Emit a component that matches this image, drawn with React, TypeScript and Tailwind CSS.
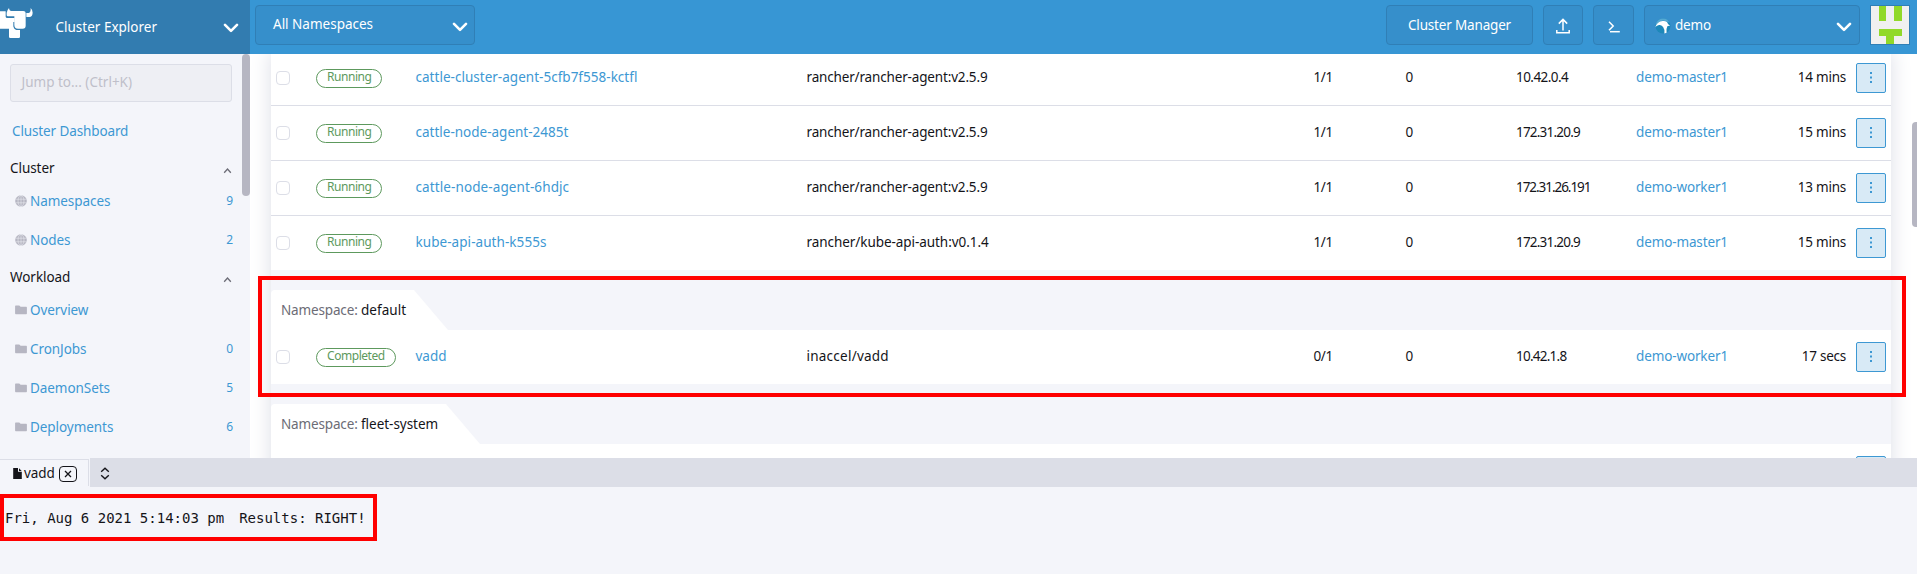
import type { ReactNode } from "react";

const rows = [
  { state: "Running", name: "cattle-cluster-agent-5cfb7f558-kctfl", nameCls: "tracking-[0.02px]", image: "rancher/rancher-agent:v2.5.9", imageCls: "tracking-[-0.16px]", ready: "1/1", ip: "10.42.0.4", ipCls: "tracking-[-0.55px]", node: "demo-master1", age: "14 mins" },
  { state: "Running", name: "cattle-node-agent-2485t", nameCls: "", image: "rancher/rancher-agent:v2.5.9", imageCls: "tracking-[-0.16px]", ready: "1/1", ip: "172.31.20.9", ipCls: "tracking-[-0.79px]", node: "demo-master1", age: "15 mins" },
  { state: "Running", name: "cattle-node-agent-6hdjc", nameCls: "tracking-[0.1px]", image: "rancher/rancher-agent:v2.5.9", imageCls: "tracking-[-0.16px]", ready: "1/1", ip: "172.31.26.191", ipCls: "tracking-[-1.05px]", node: "demo-worker1", age: "13 mins" },
  { state: "Running", name: "kube-api-auth-k555s", nameCls: "tracking-[0.06px]", image: "rancher/kube-api-auth:v0.1.4", imageCls: "tracking-[-0.06px]", ready: "1/1", ip: "172.31.20.9", ipCls: "tracking-[-0.79px]", node: "demo-master1", age: "15 mins" },
];

const defaultRow = { state: "Completed", name: "vadd", nameCls: "", image: "inaccel/vadd", imageCls: "tracking-[0.24px]", ready: "0/1", ip: "10.42.1.8", ipCls: "tracking-[-0.75px]", node: "demo-worker1", age: "17 secs" };

type Row = (typeof rows)[number];

function Chevron() {
  return (
    <svg width="16" height="10" viewBox="0 0 16 10" fill="none" stroke="#fff" strokeWidth="2.6" strokeLinecap="round" strokeLinejoin="round">
      <path d="M2 1.8 8 7.8 14 1.8" />
    </svg>
  );
}

function Logo() {
  return (
    <svg width="35" height="40" viewBox="0 0 105 120" className="shrink-0 self-start">
      <path fill="#fff" d="M0 34H17V50Q17 54 22 54H44V66H40V86H0Z" />
      <path fill="#fff" d="M27 24Q28 33 34 33H70Q77 33 77 39V77Q77 86 68 86H54Q43 86 43 75V49H24Q20 49 20 45V38Q21 31 27 24Z" />
      <path fill="#fff" d="M92 24Q98 30 98 38Q97 51 88 51H79V39H86Q93 37 92 24Z" />
      <path fill="#fff" d="M27 80H40Q43 90 54 90H60V110Q60 114 56 114H31Q27 114 27 110Z" />
    </svg>
  );
}

function Globe() {
  return (
    <svg width="12" height="12" viewBox="0 0 12 12">
      <circle cx="6" cy="6" r="5.8" fill="#b6b6c2" />
      <g fill="none" stroke="#f4f5fa" strokeWidth="0.6" opacity="0.85">
        <path d="M.5 4.200h11M.5 7.800h11M6 .3v11.400" />
        <ellipse cx="6" cy="6" rx="3" ry="5.600" />
      </g>
    </svg>
  );
}

function Folder() {
  return (
    <svg width="12" height="10" viewBox="0 0 12 10">
      <path fill="#b6b6c2" d="M.8.400H4.300L5.600 1.800H11.200Q11.900 1.800 11.900 2.500V8.600Q11.900 9.300 11.200 9.300H.8Q.1 9.300 .1 8.600V1.100Q.1.400.8.400Z" />
    </svg>
  );
}

function NavGroup({ children }: { children: ReactNode }) {
  return (
    <div className="flex h-[30px] items-center justify-between pr-[10.500px] pl-[10px] tracking-[-0.05px] text-[#141419]">
      <span>{children}</span>
      <svg width="9" height="7" viewBox="0 0 9 7" fill="none" stroke="#6c6c76" strokeWidth="1.300" className="mt-1">
        <path d="M1.200 5.700 4.500 2 7.800 5.700" />
      </svg>
    </div>
  );
}

function NavItem({ icon, label, count }: { icon: ReactNode; label: string; count?: string }) {
  return (
    <div className="flex h-[39px] items-center pr-[9px] pl-[15px]">
      <span className="flex w-[15px]">{icon}</span>
      <span className="flex-1 tracking-[-0.06px]">{label}</span>
      <span className="pt-px text-[12px]">{count}</span>
    </div>
  );
}

function TableRow({ row, line }: { row: Row; line?: boolean }) {
  return (
    <div className={line ? "flex h-[55px] items-center border-b border-[#dcdee7] bg-white" : "flex h-[54px] items-center bg-white"}>
      <div className="w-[45px] pl-[5px]">
        <div className="size-[14px] rounded-[4px] border border-[#dcdee7] bg-white" />
      </div>
      <div className="w-[99.500px]">
        <span className="inline-flex h-[19px] items-center rounded-full border border-[#5d995d] px-[10px] pb-[2px] align-middle text-[12px] tracking-[-0.45px] text-[#5d995d]">{row.state}</span>
      </div>
      <div className="w-[391px] pb-[2px] text-[#3d98d3]"><span className={row.nameCls}>{row.name}</span></div>
      <div className="w-[507px] pb-[2px]"><span className={row.imageCls}>{row.image}</span></div>
      <div className="w-[92px] pb-[2px] tracking-[-0.4px]">{row.ready}</div>
      <div className="w-[110.500px] pb-[2px]">0</div>
      <div className="w-[120px] pb-[2px]"><span className={row.ipCls}>{row.ip}</span></div>
      <div className="w-[120px] pb-[2px] tracking-[-0.13px] text-[#3d98d3]">{row.node}</div>
      <div className="flex-1 pb-[2px] text-right tracking-[-0.24px]">{row.age}</div>
      <div className="mr-[5px] ml-[10px] flex h-[30px] w-[30px] items-center justify-center rounded-[2px] border border-[#3d98d3] bg-[#d8eaf6]">
        <svg width="4" height="14" viewBox="0 0 4 14" fill="#3d98d3">
          <rect x="1" y="1" width="2" height="2" />
          <rect x="1" y="5.500" width="2" height="2" />
          <rect x="1" y="10" width="2" height="2" />
        </svg>
      </div>
    </div>
  );
}

function GroupTab({ name, nameCls }: { name: string; nameCls: string }) {
  return (
    <div className="flex h-[60px] items-end bg-[#f4f5fa]">
      <div className="flex h-10 items-center rounded-tl-[4px] bg-white pr-[7.500px] pb-[1px] pl-[10px] whitespace-pre">
        <span className="tracking-[-0.15px] text-[#6c6c76]">Namespace: </span>
        <span className={nameCls}>{name}</span>
      </div>
      <svg width="34" height="40" viewBox="0 0 34 40"><path d="M0 0 34 40H0Z" fill="#fff" /></svg>
    </div>
  );
}

export default function App() {
  return (
    <div className="relative flex h-[574px] w-[1917px] flex-col overflow-hidden bg-white font-['Noto_Sans',sans-serif] text-[13.5px] leading-[18px] text-[#141419]">
      <header className="flex h-[54px] shrink-0 bg-[#3796d4] text-white">
        <div className="flex w-[250px] items-center bg-[#327cb0] pr-[11px]">
          <Logo />
          <span className="ml-[20.500px] flex-1 pb-[1px]">Cluster Explorer</span>
          <span className="pt-[2px]"><Chevron /></span>
        </div>
        <div className="mt-[5px] ml-[5px] flex h-10 w-[220px] items-center justify-between rounded-[4px] border border-[#307fb6] bg-[#368fcb] pr-[6px] pl-[17px]">
          <span className="pb-[2px]">All Namespaces</span>
          <span className="pt-[3px]"><Chevron /></span>
        </div>
        <div className="mt-[5px] ml-auto flex h-10 w-[147px] items-center justify-center rounded-[4px] border border-[#307fb6] bg-[#368fcb] tracking-[-0.17px]">Cluster Manager</div>
        <div className="mt-[5px] ml-[10px] flex h-10 w-10 items-center justify-center rounded-[4px] border border-[#307fb6] bg-[#368fcb]">
          <svg width="14" height="16" viewBox="0 0 14 16" fill="none" stroke="#fff" strokeWidth="1.500" className="mt-[2px]">
            <path d="M7 12.500V1.500M2.800 5.600 7 1.400l4.200 4.200M.8 12v2.700h12.400V12" />
          </svg>
        </div>
        <div className="mt-[5px] ml-[10px] flex h-10 w-[41px] items-center justify-center rounded-[4px] border border-[#307fb6] bg-[#368fcb]">
          <svg width="12" height="12" viewBox="0 0 12 12" fill="none" stroke="#fff" strokeWidth="1.500" className="mt-[4px]">
            <path d="M1 .8 5.200 5 1 9.200" />
            <path d="M2 10.700H11.800" />
          </svg>
        </div>
        <div className="mt-[5px] ml-[10px] flex h-10 w-[216px] items-center rounded-[4px] border border-[#307fb6] bg-[#368fcb] pr-[7px] pl-[10px]">
          <svg width="16" height="16" viewBox="0 0 17 17" className="mt-[2px]">
            <circle cx="8.500" cy="8.500" r="8" fill="#1d88b9" />
            <path d="M1 5.500Q3.500.5 8.500.5Q13.500.5 15.500 5Q11 2.500 8 3Q4 3.500 1 7Z" fill="#55a9d2" />
            <path d="M.3 9.500Q2.500 3.800 8 3.300Q13 2.700 13.800 6.300L16 8.200L13.300 8.600Q11.800 11 12.300 15.800L10 16.400Q10.300 11.500 8.600 9.500Q6.500 7 4.300 7.500Q2 8 .3 9.500Z" fill="#fff" />
          </svg>
          <span className="ml-[4px] flex-1 tracking-[-0.18px]">demo</span>
          <span className="pt-[3px]"><Chevron /></span>
        </div>
        <div className="mt-[5px] mr-[7px] ml-[10px] h-10 w-10 border border-[#307fb6] bg-[#f0f0f0]">
          <svg width="38" height="38" viewBox="0 0 38 38" fill="#91d929" shapeRendering="crispEdges">
            <path d="M8 0h7v15H8zM23 0h8v15h-8zM8 23h23v7h-8v8h-8v-8H8z" />
          </svg>
        </div>
      </header>

      <div className="flex h-[404px] shrink-0">
        <nav className="flex w-[250px] bg-[#f4f5fa] text-[#3d98d3]">
          <div className="flex w-[242px] flex-col">
            <div className="mx-[10px] mt-[10px] flex h-[38px] items-center rounded-[3px] border border-[#dcdee7] bg-[#eeeff4] pb-[2px] pl-[10.500px] text-[#bfbfca]">Jump to... (Ctrl+K)</div>
            <div className="mt-[11px] flex h-[36px] items-center pl-[12px] tracking-[-0.12px]">Cluster Dashboard</div>
            <div className="mt-[4px]"><NavGroup>Cluster</NavGroup></div>
            <div className="-mt-[2px]">
              <NavItem icon={<Globe />} label="Namespaces" count="9" />
              <NavItem icon={<Globe />} label="Nodes" count="2" />
            </div>
            <div className="mt-[3px]"><NavGroup>Workload</NavGroup></div>
            <div className="-mt-[2px]">
              <NavItem icon={<Folder />} label="Overview" />
              <NavItem icon={<Folder />} label="CronJobs" count="0" />
              <NavItem icon={<Folder />} label="DaemonSets" count="5" />
              <NavItem icon={<Folder />} label="Deployments" count="6" />
            </div>
          </div>
          <div className="h-[142px] w-2 rounded-[4px] bg-[#b6b6c2]" />
        </nav>

        <main className="flex flex-1 overflow-hidden pl-[21px]">
          <div className="-mt-[3px] w-[1620px] self-start bg-white shadow-[0_0_20px_#dcdee7]">
            {rows.map((r, i) => (
              <TableRow key={i} row={r} line={i < 3} />
            ))}
            <GroupTab name="default" nameCls="tracking-[0.05px]" />
            <TableRow row={defaultRow} />
            <GroupTab name="fleet-system" nameCls="tracking-[-0.03px]" />
            <div className="flex h-[54px] justify-end bg-white pt-[12px] pr-[5px]">
              <div className="h-[30px] w-[30px] rounded-[2px] border border-[#3d98d3] bg-[#d8eaf6]" />
            </div>
          </div>
          <div className="mt-[68px] ml-auto h-[105px] w-[5px] rounded-l-[4px] bg-[#b6b6c2]" />
        </main>
      </div>

      <div className="relative z-10 flex h-[29px] shrink-0 bg-[#dcdee7]">
        <div className="flex w-[90px] bg-[#f4f5fa] pt-[1px]">
          <div className="mb-[1px] flex w-[89px] items-center border-t border-r border-[#dcdee7] pl-[12.500px]">
            <svg width="9" height="11" viewBox="0 0 9 11" className="mt-[1px]">
              <path fill="#141419" d="M.2 0H5V3.800H8.800V11H.2Z" />
              <path fill="#141419" d="M6 .2 8.700 2.900H6Z" />
            </svg>
            <span className="ml-[2.500px] pb-[1px] tracking-[-0.1px]">vadd</span>
            <div className="mt-px ml-[4.500px] flex h-4 w-[18px] items-center justify-center rounded-[4px] border border-[#141419]">
              <svg width="8" height="8" viewBox="0 0 8 8" stroke="#141419" strokeWidth="1.300"><path d="M1 1 7 7M7 1 1 7" /></svg>
            </div>
          </div>
        </div>
        <svg width="10" height="13" viewBox="0 0 10 13" fill="none" stroke="#141419" strokeWidth="1.400" className="mt-[9px] ml-[9.500px]">
          <path d="M1.200 4.700 5 1.200 8.800 4.700M1.200 8.300 5 11.800 8.800 8.300" />
        </svg>
      </div>

      <div className="flex-1 bg-[#f4f5fa] pt-[22px] pl-[5px] font-['DejaVu_Sans_Mono',monospace] text-[14px] whitespace-pre">
        <span>Fri, Aug 6 2021 5:14:03 pm</span>
        <span className="ml-[15px]">Results: RIGHT!</span>
      </div>

      <div className="absolute top-[276px] left-[258px] z-20 h-[121px] w-[1648px] border-4 border-[#ff0000]" />
      <div className="absolute top-[494px] left-0 z-20 h-[47px] w-[377px] border-4 border-[#ff0000]" />
    </div>
  );
}
